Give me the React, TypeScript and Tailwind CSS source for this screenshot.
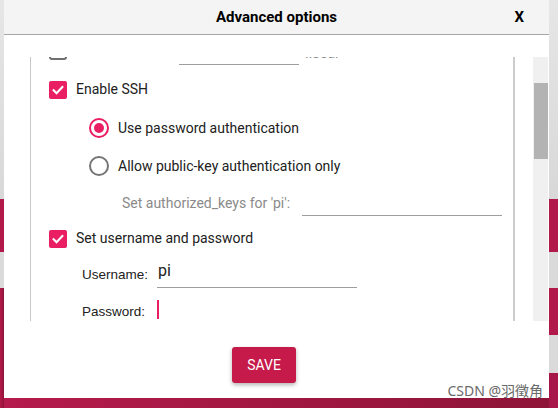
import React from "react"

const pink = "bg-[#e91e63]"

function Checkbox({ checked }: { checked: boolean }) {
  if (!checked) {
    return <span className="block h-[18px] w-[18px] shrink-0 rounded-[3px] border-2 border-[#6f6f6f]" />
  }
  return (
    <span className={`flex h-[18px] w-[18px] shrink-0 items-center justify-center rounded-[2px] ${pink}`}>
      <svg width="14" height="14" viewBox="0 0 24 24" fill="none">
        <path d="M4.5 12.5l5 5L19.5 7" stroke="#fff" strokeWidth="3.6" strokeLinecap="square" />
      </svg>
    </span>
  )
}

function Radio({ checked }: { checked: boolean }) {
  return (
    <span
      className={`flex h-[20px] w-[20px] shrink-0 items-center justify-center rounded-full border-2 ${
        checked ? "border-[#e91e63]" : "border-[#757575]"
      }`}
    >
      {checked ? <span className={`block h-[10px] w-[10px] rounded-full ${pink}`} /> : null}
    </span>
  )
}

function Stripes({ extra }: { extra?: boolean }) {
  return (
    <div className="flex h-full flex-col">
      <div className="h-[199px] bg-linear-to-b from-[#e6e6e6] to-[#d8d8d8]" />
      <div className="h-[53px] bg-[#b0194a]" />
      <div className="h-[36px] bg-[#dadada]" />
      {extra ? (
        <>
          <div className="h-[47px] bg-[#b0194a]" />
          <div className="h-[38px] bg-[#dadada]" />
          <div className="flex-1 bg-[#a8174a]" />
        </>
      ) : (
        <div className="flex-1 bg-linear-to-r from-[#b51b4c] to-[#8e1438]" />
      )}
    </div>
  )
}

export default function App() {
  return (
    <div
      className="relative h-[408px] w-[558px] overflow-hidden text-[#212121]"
      style={{ fontFamily: "Roboto, 'Noto Sans', sans-serif" }}
    >
      <div className="flex h-full">
        <div className="w-[4px]">
          <Stripes />
        </div>
        <div className="flex-1">
          <Stripes />
        </div>
        <div className="w-[9px]">
          <Stripes extra />
        </div>
      </div>

      {/* dialog */}
      <div className="absolute left-[4px] top-0 flex h-[398px] w-[545px] flex-col bg-white">
        <div className="grid h-[35px] grid-cols-[1fr_auto_1fr] items-center border-b border-[#a6a6a6] bg-[#f4f4f4]">
          <div />
          <div className="text-[15px] font-bold text-black">Advanced options</div>
          <div className="flex justify-end pr-[25px] text-[15px] font-bold text-black">X</div>
        </div>

        <div className="mt-[22px] flex h-[264px]">
          <div className="ml-[26px] h-full w-[485px] overflow-hidden border-l border-r-2 border-l-[#c8c8c8] border-r-[#cccccc]">
            <div className="mt-[-25px] pl-[18px]">
              <div className="flex h-[38px] items-center">
                <Checkbox checked={false} />
                <span className="ml-[9px] w-[103px] text-[14px]">Set hostname:</span>
                <div className="mt-[2px] h-[26px] w-[120px] border-b border-[#9e9e9e]" />
                <span className="ml-[6px] mt-[5px] text-[14px] text-[#8a8a8a]">.local</span>
              </div>
              <div className="flex h-[39px] items-center">
                <Checkbox checked />
                <span className="ml-[9px] text-[14px]">Enable SSH</span>
              </div>
              <div className="flex h-[38px] items-center pl-[40px]">
                <Radio checked />
                <span className="ml-[9px] text-[14px]">Use password authentication</span>
              </div>
              <div className="flex h-[38px] items-center pl-[40px]">
                <Radio checked={false} />
                <span className="ml-[9px] text-[14px]">Allow public-key authentication only</span>
              </div>
              <div className="flex h-[36px] items-center pl-[73px]">
                <span className="w-[180px] text-[14px] text-[#8a8a8a]">Set authorized_keys for 'pi':</span>
                <div className="h-[26px] w-[200px] border-b border-[#9e9e9e]" />
              </div>
              <div className="flex h-[35px] items-center">
                <Checkbox checked />
                <span className="ml-[9px] text-[14px]">Set username and password</span>
              </div>
              <div
                className="flex h-[38px] items-center pl-[33px]"
                style={{ fontFamily: "'Liberation Sans', Arial, sans-serif" }}
              >
                <span className="w-[75px] text-[13.5px]">Username:</span>
                <div
                  className="h-[26px] w-[200px] border-b border-[#9e9e9e] pl-[1px] text-[16px] leading-[17px]"
                  style={{ fontFamily: "Roboto, sans-serif" }}
                >
                  pi
                </div>
              </div>
              <div
                className="flex h-[37px] items-center pl-[33px]"
                style={{ fontFamily: "'Liberation Sans', Arial, sans-serif" }}
              >
                <span className="w-[75px] text-[13.5px]">Password:</span>
                <span className={`mb-[7px] block h-[19px] w-[2px] ${pink}`} />
              </div>
            </div>
          </div>
          <div className="ml-[18px] h-full w-[15px] bg-[#f0f0f0] pt-[26px]">
            <div className="ml-[1px] h-[76px] w-[14px] bg-[#b3b3b3]" />
          </div>
        </div>

        <div className="mt-[26px] pl-[228px]">
          <button className="h-[36px] w-[64px] rounded-[3px] bg-[#c51a4a] text-[14px] text-white shadow-[0_2px_4px_rgba(0,0,0,0.3)]">
            SAVE
          </button>
        </div>
      </div>

      <div
        className="absolute right-[15px] top-[380px] text-[14px] text-[#6a6a6a]"
        style={{ fontFamily: "'Noto Sans', 'Noto Sans CJK SC', sans-serif" }}
      >
        CSDN @羽徵角
      </div>
    </div>
  )
}
